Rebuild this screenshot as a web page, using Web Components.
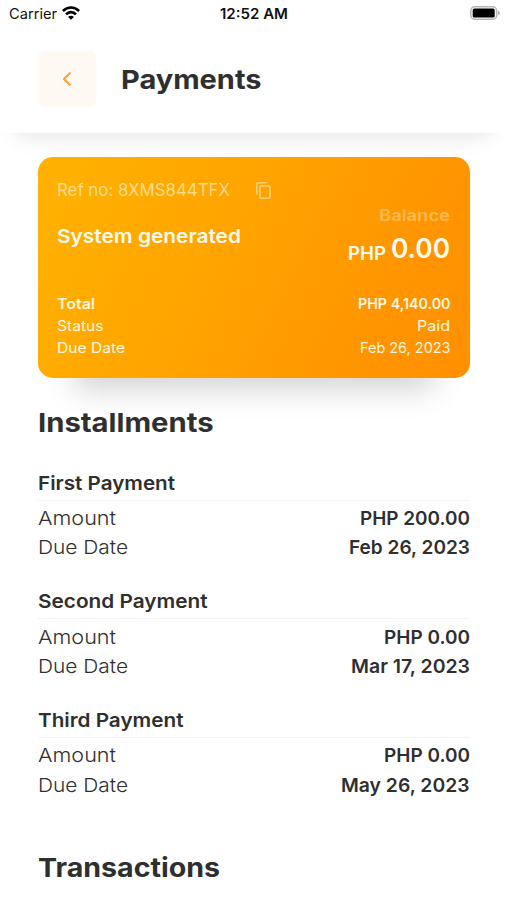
<!DOCTYPE html>
<html lang="en">
<head>
<meta charset="utf-8">
<title>Payments</title>
<style>
html,body{margin:0;background:#fff}
body{width:507px;height:900px;overflow:hidden;font-family:Inter,"Open Sans",sans-serif;color:#2f2f2f}
</style>
</head>
<body>
<payments-screen></payments-screen>
<script>
const define = (name, html, setup) => customElements.define(name, class extends HTMLElement {
  constructor() {
    super();
    this.attachShadow({ mode: "open" });
  }
  connectedCallback() {
    this.shadowRoot.innerHTML = html;
    if (setup) setup(this, this.shadowRoot);
  }
});

/* One line of text set to a given width: w = width, s = size, wt = weight, lh = line height */
define("text-line", `<style>
:host{display:block;flex:none;white-space:nowrap}
span{display:inline-block;vertical-align:top;transform-origin:0 0}
</style><span><slot></slot></span>`, (el, root) => {
  const span = root.querySelector("span");
  const w = +el.getAttribute("w");
  span.style.fontSize = el.getAttribute("s") + "px";
  span.style.fontWeight = el.getAttribute("wt") || 400;
  span.style.lineHeight = el.getAttribute("lh") + "px";
  el.style.height = el.getAttribute("lh") + "px";
  const natural = span.getBoundingClientRect().width;
  el.style.width = w + "px";
  span.style.transform = `scaleX(${w / natural})`;
});

define("status-bar", `<style>
:host{display:grid;grid-template-columns:1fr auto 1fr;align-items:center;height:28px;padding:0 7px 0 8.500px;color:#111}
.l{display:flex;align-items:center;gap:5.500px}
.r{justify-self:end;display:flex;margin-top:-2px}
svg{display:block}
</style>
<div class="l"><text-line w="48" s="14.2" lh="28">Carrier</text-line>
<svg width="18" height="14" viewBox="0 0 18 14" fill="none" stroke="#000" stroke-width="2.6" style="margin-top:-3px"><path d="M.9 5C5.600.3 12.400.3 17.100 5"/><path d="M4 8.300C6.800 5.400 11.200 5.400 14 8.300"/><path d="M9 13.800L6.100 10.900C7.800 9.400 10.200 9.400 11.900 10.900Z" fill="#000" stroke="none"/></svg></div>
<text-line w="68" s="14" wt="600" lh="28">12:52 AM</text-line>
<div class="r"><svg width="30" height="14" viewBox="0 0 30 14"><rect x=".8" y=".8" width="25.800" height="12.400" rx="3.800" fill="#fff" stroke="#b5b5b5" stroke-width="1.500"/><rect x="2.700" y="2.600" width="22" height="8.800" rx="1.500" fill="#000"/><path d="M28 4.800Q29.800 5.500 29.800 7T28 9.200Z" fill="#aaa"/></svg></div>`);

define("page-header", `<style>
:host{display:block;height:133px;background:#fff;box-shadow:0 20px 20px -16px rgba(0,0,0,.1);position:relative}
.row{display:flex;align-items:center;height:54px;padding:24px 38px 0;gap:24px}
button{all:unset;width:58px;height:56px;border-radius:7px;background:#fff9f3;box-shadow:0 0 3px #fffaf5;display:grid;place-items:center}
text-line{margin:1px 0 0 1px}
</style>
<status-bar></status-bar>
<div class="row"><button aria-label="Back"><svg width="10" height="16" viewBox="0 0 10 16" fill="none" stroke="#ff9f38" stroke-width="2.100" stroke-linecap="round" stroke-linejoin="round"><path d="M7.800 2.200L2 8L7.800 13.800"/></svg></button>
<text-line w="140.5" s="26.3" wt="700" lh="40">Payments</text-line></div>`);

define("balance-card", `<style>
:host{display:block;position:relative;height:221px;box-sizing:border-box;padding:21px 20px 0 19px;border-radius:15px;color:#fff7e0;
background:linear-gradient(117deg,#ffb000 8%,#ffa200 48%,#ff9500 78%,#ff9000);box-shadow:0 46px 30px -36px rgba(0,0,0,.19)}
.row{display:flex;justify-content:space-between}
.ref{display:flex;align-items:center;gap:26px;height:24px;color:#ffdc8e}
.main{display:flex;justify-content:space-between;height:91px}
.bal{display:flex;flex-direction:column;align-items:flex-end;color:#fffaf0}
.amt{display:flex;gap:5px;margin-top:1px}
.amt :first-child{margin-top:6px}
svg{display:block}
</style>
<div class="ref"><text-line w="173" s="16.700" lh="24">Ref no: 8XMS844TFX</text-line>
<svg width="15" height="17" viewBox="0 0 15 17" fill="none" stroke="#ffd37b" stroke-width="1.500"><path d="M.8 12.500V2Q.8.8 2 .8H10.500"/><rect x="4" y="4" width="10" height="12.200" rx="1.200"/></svg></div>
<div class="main"><text-line w="184" s="19.300" wt="600" lh="30" style="margin-top:19px;color:#fffaf0">System generated</text-line>
<div class="bal"><text-line w="71" s="16.500" wt="600" lh="24" style="margin-top:1px;color:#ffb950">Balance</text-line>
<div class="amt"><text-line w="38" s="18.700" wt="600" lh="40">PHP</text-line><text-line w="59" s="26.800" wt="600" lh="40">0.00</text-line></div></div></div>
<div class="row"><text-line w="38" s="14.500" wt="600" lh="22">Total</text-line><text-line w="92.5" s="14.500" wt="600" lh="22">PHP 4,140.00</text-line></div>
<div class="row"><text-line w="46.5" s="14.500" lh="22">Status</text-line><text-line w="33" s="14.500" lh="22">Paid</text-line></div>
<div class="row"><text-line w="68" s="14.500" lh="22">Due Date</text-line><text-line w="90.5" s="14.500" lh="22">Feb 26, 2023</text-line></div>`);

define("installment-item", `<style>
:host{display:block;height:118.600px}
.row{display:flex;justify-content:space-between}
.head{height:32px;border-bottom:1px solid #f3f3f3;margin-bottom:3.400px}
</style><div class="head"></div><div class="row a"></div><div class="row d"></div>`, (el, root) => {
  const line = (text, w, wt, lh) => `<text-line w="${w}" s="19.3" wt="${wt}" lh="${lh}">${text}</text-line>`;
  const { name, nameW, amount, amountW, due, dueW } = el.dataset;
  root.querySelector(".head").innerHTML = line(name, nameW, 600, 30);
  root.querySelector(".a").innerHTML = line("Amount", 78, 350, 29.3) + line(amount, amountW, 600, 29.3);
  root.querySelector(".d").innerHTML = line("Due Date", 90, 350, 29.3) + line(due, dueW, 600, 29.3);
});

define("payments-screen", `<style>
:host{display:block}
main{padding:24px 37.500px 0 37.500px}
balance-card{margin:0 -.5px 0 .5px}
.list{margin-top:24.700px}
</style>
<page-header></page-header>
<main><balance-card></balance-card>
<text-line w="175.5" s="26.3" wt="700" lh="40" style="margin-top:25px">Installments</text-line>
<div class="list">
<installment-item data-name="First Payment" data-name-w="137" data-amount="PHP 200.00" data-amount-w="110" data-due="Feb 26, 2023" data-due-w="121"></installment-item>
<installment-item data-name="Second Payment" data-name-w="169.5" data-amount="PHP 0.00" data-amount-w="86" data-due="Mar 17, 2023" data-due-w="119"></installment-item>
<installment-item data-name="Third Payment" data-name-w="145.5" data-amount="PHP 0.00" data-amount-w="86" data-due="May 26, 2023" data-due-w="128.5"></installment-item>
</div>
<text-line w="182" s="26.3" wt="700" lh="40" style="margin-top:24.600px">Transactions</text-line>
</main>`);
</script>
</body>
</html>
